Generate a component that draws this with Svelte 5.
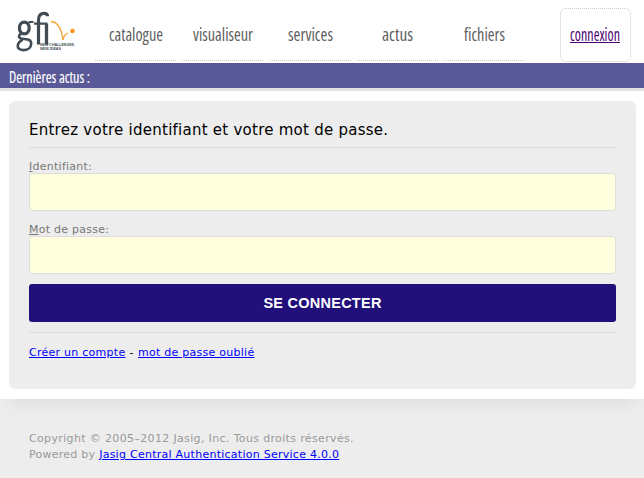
<script>
  const items = [
    { label: 'catalogue', width: 54 },
    { label: 'visualiseur', width: 60 },
    { label: 'services', width: 45 },
    { label: 'actus', width: 31 },
    { label: 'fichiers', width: 41 }
  ];
</script>

{#snippet condensed(label, width)}
  <svg class="word" {width} height="24" role="img" aria-label={label}>
    <text x="0" y="17" textLength={width} lengthAdjust="spacingAndGlyphs">{label}</text>
  </svg>
{/snippet}

<div class="page">
  <header>
    <svg class="logo" width="62" height="42" viewBox="0 0 62 42" aria-label="gfi">
      <g fill="none" stroke="#414c55">
        <ellipse cx="8.300" cy="18" rx="4.900" ry="5.800" stroke-width="3.300" />
        <path d="M11.500 13.500l2.500-1.500h3.500" stroke-width="2" />
        <path d="M5 23.500c-4 3.500-1.500 5.300 3.500 5.500 5 .3 7 1.700 6.700 5-.4 4.500-4 6.200-8 6.100-4-.1-5.800-2.200-5.400-5 .3-2.300 2-4 4.700-5.300" stroke-width="2.600" />
        <path d="M22.500 34.500V10c0-4.800 2.300-6.700 5.500-6.700 2.400 0 3.500.9 3.500 3" stroke-width="3.200" />
        <path d="M18 13.700h12.500v20.800" stroke-width="2.200" />
        <path d="M30.500 14v20.500" stroke-width="3.300" />
      </g>
      <path d="M35 11.500c7 .5 10.500 6.500 12 18.500" fill="none" stroke="#f7a234" stroke-width="1.300" />
      <path d="M47 29.500c.7-3 2.300-5.500 5-6.500" fill="none" stroke="#f7a234" stroke-width="1.300" />
      <circle cx="56.500" cy="21" r="2.300" fill="#f7931e" />
      <g class="tagline">
        <text x="24" y="36.300" textLength="35" lengthAdjust="spacingAndGlyphs">NEW CHALLENGES,</text>
        <text x="24" y="40" textLength="21" lengthAdjust="spacingAndGlyphs">NEW IDEAS</text>
      </g>
    </svg>
    <nav>
      {#each items as item}
        <a class="item" href="#{item.label}">{@render condensed(item.label, item.width)}</a>
      {/each}
    </nav>
    <a class="login" href="#connexion">{@render condensed('connexion', 50)}</a>
  </header>
  <div class="news">{@render condensed('Dernières actus :', 81)}</div>
  <main>
    <form class="card" onsubmit={(e) => e.preventDefault()}>
      <h2>Entrez votre identifiant et votre mot de passe.</h2>
      <div class="field">
        <label for="user"><u>I</u>dentifiant:</label>
        <input id="user" type="text" />
      </div>
      <div class="field">
        <label for="pass"><u>M</u>ot de passe:</label>
        <input id="pass" type="password" />
      </div>
      <button>SE CONNECTER</button>
      <p class="links"><a href="#compte">Créer un compte</a> <span>-</span> <a href="#oubli">mot de passe oublié</a></p>
    </form>
  </main>
  <footer>
    <div class="shade"></div>
    <p class="copyright">Copyright © 2005–2012 Jasig, Inc. Tous droits réservés.</p>
    <p>Powered by <a href="#cas">Jasig Central Authentication Service 4.0.0</a></p>
  </footer>
</div>

<style>
  .page { height: 478px; overflow: hidden; background: #ededed; font: 11px/16px Verdana, "DejaVu Sans", sans-serif; letter-spacing: 0.26px; display: flex; flex-direction: column; }
  header { height: 63px; flex: none; display: flex; background: #fff; }
  .logo { margin: 10px 0 0 16px; flex: none; overflow: visible; letter-spacing: 0; }
  .tagline { font: 700 4px "Liberation Sans", sans-serif; fill: #414c55; }
  nav { display: flex; gap: 6.3px; margin-left: 17px; }
  .item { box-sizing: border-box; width: 81px; height: 61px; padding-top: 24px; display: flex; justify-content: center; border-bottom: 1px dotted #ccc; }
  .word { flex: none; display: block; overflow: visible; font: 18px "Open Sans", "Liberation Sans", sans-serif; font-stretch: 75%; letter-spacing: 0; fill: #606060; }
  .login { box-sizing: border-box; width: 71px; height: 54px; margin: 8px 13px 0 auto; padding: 15px 1px 0 0; display: flex; justify-content: center; border: 1px dotted #ccc; border-radius: 6px; }
  .login :global(.word) { fill: #4b006e; border-bottom: 1px solid #4b006e; height: 18px; }
  .news { height: 25px; flex: none; padding-left: 9px; background: #5a5997; border-bottom: 3px solid #e1e1e1; }
  .news :global(.word) { fill: #fff; stroke: #fff; stroke-width: 0.15px; font-size: 16px; padding-top: 3px; }
  main { flex: none; background: #fff; padding: 10px 8px 10px 9px; position: relative; z-index: 1; }
  .card { box-sizing: border-box; height: 288px; padding: 18px 20px 0; background: #ededed; border-radius: 6px; }
  h2 { margin: 0 0 10px; height: 28px; border-bottom: 1px solid #ddd; font-size: 15px; line-height: 22px; font-weight: 400; color: #000; letter-spacing: 0.25px; white-space: nowrap; }
  .field { display: flex; flex-direction: column; height: 53px; margin-bottom: 10px; }
  label { height: 15px; line-height: 17px; color: #777; }
  input { box-sizing: border-box; width: 100%; height: 38px; margin: 0; padding: 0 8px; border: 1px solid #ddd; border-radius: 3px; background: #ffffdd; outline: none; }
  button { display: block; width: 100%; height: 38px; padding: 0; border: 0; border-radius: 3px; background: #210f7a; color: #fff; font: 700 14.5px "Liberation Sans", Arial, sans-serif; letter-spacing: 0.25px; }
  .links { margin: 10px 0 0; padding-top: 12px; border-top: 1px solid #ddd; color: #000; }
  .links span { margin: 0 0.4px; }
  .links a, footer a { color: #00f; }
  footer { position: relative; flex: 1; padding: 32px 29px 0; color: #999; }
  footer p { margin: 0; }
  .copyright { letter-spacing: 0.35px; }
  .shade { position: absolute; left: 10px; right: 10px; top: -20px; height: 20px; box-shadow: 0 2px 20px rgba(0, 0, 0, .09); }
</style>
